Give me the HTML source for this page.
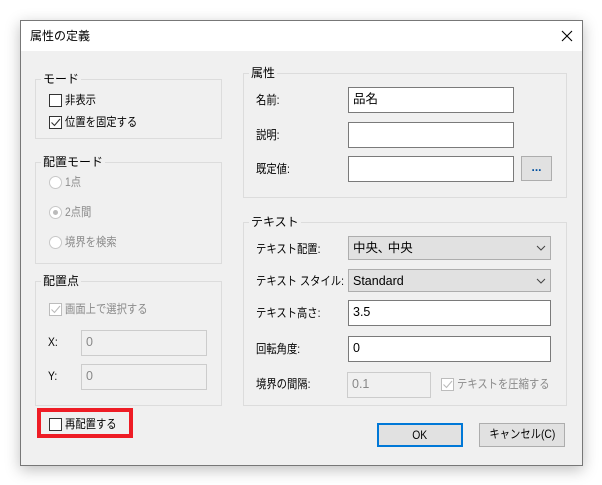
<!DOCTYPE html>
<html><head><meta charset="utf-8"><style>
*{box-sizing:border-box;margin:0;padding:0}
body{width:602px;height:485px;background:#fff;position:relative;overflow:hidden;font-family:"Segoe UI","Liberation Sans","Noto Sans CJK JP",sans-serif;font-size:12px;color:#000}
.a{position:absolute}
#dlg{left:20px;top:20px;width:563px;height:446px;background:#f0f0f0;border:1px solid #777;box-shadow:0 4px 14px rgba(0,0,0,.25)}
#title{left:0;top:0;width:561px;height:30px;background:#fff}
.g{position:absolute;border:1px solid #dcdcdc}
.gl{position:absolute;background:#f0f0f0;padding:0 2px;line-height:14px;white-space:nowrap}
.in{position:absolute;background:#fff;border:1px solid #7a7a7a;padding-left:4px;line-height:23px;font-size:12.5px}
.dis{background:#f0f0f0;border-color:#ccc;color:#888}
.cb{position:absolute;width:13px;height:13px;border:1px solid #333;background:#fff}
.cbd{border-color:#bcbcbc}
.rd{position:absolute;width:13px;height:13px;border:1px solid #c8c8c8;border-radius:50%;background:#fff}
.t{position:absolute;white-space:nowrap;line-height:14px;transform:scaleX(.86);transform-origin:left}
.gr{color:#8a8a8a}
.cmb{position:absolute;background:#e1e1e1;border:1px solid #adadad;padding-left:4px;line-height:22px;font-size:12.5px}
.btn{position:absolute;background:#e1e1e1;border:1px solid #adadad;text-align:center;line-height:21px}
.btn span{display:inline-block;transform:scaleX(.86)}
</style></head><body>
<div id="dlg" class="a">
<div id="title" class="a"><span class="t" style="left:9px;top:8px;transform:none">属性の定義</span>
<svg class="a" style="left:540px;top:9px" width="12" height="12"><path d="M1 1L11 11M11 1L1 11" stroke="#000" stroke-width="1.1"/></svg></div>
</div>
<div class="g" style="left:35px;top:79px;width:187px;height:60px"></div><div class="gl" style="left:41px;top:72px">モード</div>
<div class="cb" style="left:49px;top:94px"></div><span class="t" style="left:65px;top:93px">非表示</span>
<div class="cb" style="left:49px;top:116px"></div><svg class="a" style="left:50px;top:117px" width="11" height="11"><path d="M1.5 5.5L4.5 8.5L10 2" stroke="#333" fill="none" stroke-width="1.1"/></svg><span class="t" style="left:65px;top:115px">位置を固定する</span>

<div class="g" style="left:35px;top:162px;width:187px;height:102px"></div><div class="gl" style="left:41px;top:155px">配置モード</div>
<div class="rd" style="left:49px;top:176px"></div><span class="t gr" style="left:65px;top:175px">1点</span>
<div class="rd" style="left:49px;top:206px"></div><div class="a" style="left:53px;top:210px;width:5px;height:5px;border-radius:50%;background:#bbb"></div><span class="t gr" style="left:65px;top:205px">2点間</span>
<div class="rd" style="left:49px;top:236px"></div><span class="t gr" style="left:65px;top:235px">境界を検索</span>

<div class="g" style="left:35px;top:281px;width:187px;height:125px"></div><div class="gl" style="left:41px;top:274px">配置点</div>
<div class="cb cbd" style="left:49px;top:303px"></div><svg class="a" style="left:50px;top:304px" width="11" height="11"><path d="M1.5 5.5L4.5 8.5L10 2" stroke="#bbb" fill="none" stroke-width="1.1"/></svg><span class="t gr" style="left:65px;top:302px">画面上で選択する</span>
<span class="t" style="left:48px;top:335px">X:</span><div class="in dis" style="left:81px;top:330px;width:126px;height:26px">0</div>
<span class="t" style="left:48px;top:369px">Y:</span><div class="in dis" style="left:81px;top:364px;width:126px;height:26px">0</div>

<div class="a" style="left:37px;top:408px;width:96px;height:30px;border:4px solid #ee1c25"></div>
<div class="cb" style="left:49px;top:418px"></div><span class="t" style="left:65px;top:417px">再配置する</span>

<div class="g" style="left:243px;top:73px;width:324px;height:125px"></div><div class="gl" style="left:249px;top:66px">属性</div>
<span class="t" style="left:256px;top:93px">名前:</span><div class="in" style="left:348px;top:87px;width:166px;height:26px">品名</div>
<span class="t" style="left:256px;top:128px">説明:</span><div class="in" style="left:348px;top:122px;width:166px;height:26px"></div>
<span class="t" style="left:256px;top:162px">既定値:</span><div class="in" style="left:348px;top:156px;width:166px;height:26px"></div>
<div class="btn" style="left:521px;top:156px;width:31px;height:25px;color:#0050a0;font-weight:bold">...</div>

<div class="g" style="left:243px;top:222px;width:324px;height:184px"></div><div class="gl" style="left:249px;top:215px">テキスト</div>
<span class="t" style="left:256px;top:242px">テキスト配置:</span><div class="cmb" style="left:348px;top:236px;width:203px;height:24px">中央､ 中央</div>
<span class="t" style="left:256px;top:274px">テキスト スタイル:</span><div class="cmb" style="left:348px;top:269px;width:203px;height:23px">Standard</div>
<svg class="a" style="left:536px;top:245px" width="10" height="6"><path d="M1 1L5 5L9 1" stroke="#444" fill="none"/></svg>
<svg class="a" style="left:536px;top:278px" width="10" height="6"><path d="M1 1L5 5L9 1" stroke="#444" fill="none"/></svg>
<span class="t" style="left:256px;top:306px">テキスト高さ:</span><div class="in" style="left:348px;top:300px;width:203px;height:26px">3.5</div>
<span class="t" style="left:256px;top:342px">回転角度:</span><div class="in" style="left:348px;top:336px;width:203px;height:26px">0</div>
<span class="t" style="left:256px;top:377px">境界の間隔:</span><div class="in dis" style="left:347px;top:372px;width:84px;height:26px">0.1</div>
<div class="cb cbd" style="left:441px;top:378px"></div><svg class="a" style="left:442px;top:379px" width="11" height="11"><path d="M1.5 5.5L4.5 8.5L10 2" stroke="#bbb" fill="none" stroke-width="1.1"/></svg><span class="t gr" style="left:457px;top:377px">テキストを圧縮する</span>

<div class="btn" style="left:377px;top:423px;width:86px;height:24px;border:2px solid #0078d7"><span>OK</span></div>
<div class="btn" style="left:479px;top:423px;width:86px;height:24px"><span>キャンセル(C)</span></div>
</body></html>
